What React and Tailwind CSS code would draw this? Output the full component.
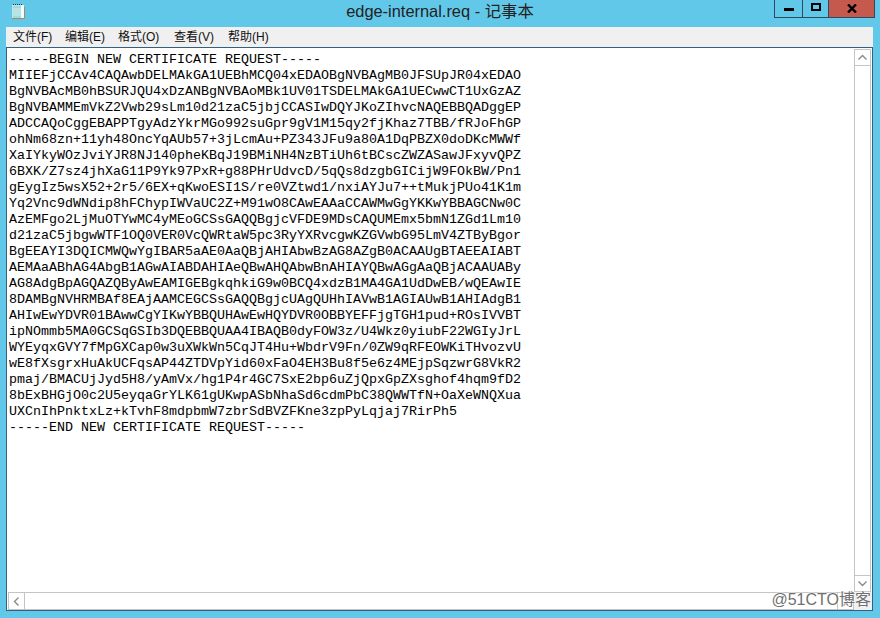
import React from "react";

const lines = [
  "-----BEGIN NEW CERTIFICATE REQUEST-----",
  "MIIEFjCCAv4CAQAwbDELMAkGA1UEBhMCQ04xEDAOBgNVBAgMB0JFSUpJR04xEDAO",
  "BgNVBAcMB0hBSURJQU4xDzANBgNVBAoMBk1UV01TSDELMAkGA1UECwwCT1UxGzAZ",
  "BgNVBAMMEmVkZ2Vwb29sLm10d21zaC5jbjCCASIwDQYJKoZIhvcNAQEBBQADggEP",
  "ADCCAQoCggEBAPPTgyAdzYkrMGo992suGpr9gV1M15qy2fjKhaz7TBB/fRJoFhGP",
  "ohNm68zn+11yh48OncYqAUb57+3jLcmAu+PZ343JFu9a80A1DqPBZX0doDKcMWWf",
  "XaIYkyWOzJviYJR8NJ140pheKBqJ19BMiNH4NzBTiUh6tBCscZWZASawJFxyvQPZ",
  "6BXK/Z7sz4jhXaG11P9Yk97PxR+g88PHrUdvcD/5qQs8dzgbGICijW9FOkBW/Pn1",
  "gEygIz5wsX52+2r5/6EX+qKwoESI1S/re0VZtwd1/nxiAYJu7++tMukjPUo41K1m",
  "Yq2Vnc9dWNdip8hFChypIWVaUC2Z+M91wO8CAwEAAaCCAWMwGgYKKwYBBAGCNw0C",
  "AzEMFgo2LjMuOTYwMC4yMEoGCSsGAQQBgjcVFDE9MDsCAQUMEmx5bmN1ZGd1Lm10",
  "d21zaC5jbgwWTF1OQ0VER0VcQWRtaW5pc3RyYXRvcgwKZGVwbG95LmV4ZTByBgor",
  "BgEEAYI3DQICMWQwYgIBAR5aAE0AaQBjAHIAbwBzAG8AZgB0ACAAUgBTAEEAIABT",
  "AEMAaABhAG4AbgB1AGwAIABDAHIAeQBwAHQAbwBnAHIAYQBwAGgAaQBjACAAUABy",
  "AG8AdgBpAGQAZQByAwEAMIGEBgkqhkiG9w0BCQ4xdzB1MA4GA1UdDwEB/wQEAwIE",
  "8DAMBgNVHRMBAf8EAjAAMCEGCSsGAQQBgjcUAgQUHhIAVwB1AGIAUwB1AHIAdgB1",
  "AHIwEwYDVR01BAwwCgYIKwYBBQUHAwEwHQYDVR0OBBYEFFjgTGH1pud+ROsIVVBT",
  "ipNOmmb5MA0GCSqGSIb3DQEBBQUAA4IBAQB0dyFOW3z/U4Wkz0yiubF22WGIyJrL",
  "WYEyqxGVY7fMpGXCap0w3uXWkWn5CqJT4Hu+WbdrV9Fn/0ZW9qRFEOWKiTHvozvU",
  "wE8fXsgrxHuAkUCFqsAP44ZTDVpYid60xFaO4EH3Bu8f5e6z4MEjpSqzwrG8VkR2",
  "pmaj/BMACUjJyd5H8/yAmVx/hg1P4r4GC7SxE2bp6uZjQpxGpZXsghof4hqm9fD2",
  "8bExBHGjO0c2U5eyqaGrYLK61gUKwpASbNhaSd6cdmPbC38QWWTfN+OaXeWNQXua",
  "UXCnIhPnktxLz+kTvhF8mdpbmW7zbrSdBVZFKne3zpPyLqjaj7RirPh5",
  "-----END NEW CERTIFICATE REQUEST-----",
];

const menus = [
  ["文件(F)", "w-[52px]"],
  ["编辑(E)", "w-[53px]"],
  ["格式(O)", "w-[56px]"],
  ["查看(V)", "w-[54px]"],
  ["帮助(H)", "w-[54px]"],
];

const NotepadIcon = () => (
  <svg width="13" height="16" viewBox="0 0 13 16">
    <rect x="0" y="1" width="11" height="13" fill="#bfe6e8" />
    <rect x="1" y="2" width="8" height="12" fill="#a5dadd" />
    <path d="M1 5h8M1 7h8M1 9h8M1 11h8" stroke="#c9eef0" />
    <rect x="9" y="1" width="3" height="13" fill="#f4fbfb" />
    <path d="M0 14.5h12.5V3" fill="none" stroke="#a98a5e" />
    <path d="M1 .5h1M3 .5h1M5 .5h1M7 .5h1M9 .5h1" stroke="#333" />
  </svg>
);

const Arrow = ({ d }) => (
  <svg width="9" height="7" viewBox="0 0 9 7">
    <path d={d} fill="none" stroke="#8a8a8a" strokeWidth="1.4" />
  </svg>
);

const App = () => {
  return (
    <div className="w-[880px] h-[618px] bg-[#62c8ea] flex flex-col overflow-hidden relative font-['Liberation_Sans','Noto_Sans_CJK_SC',sans-serif]">
      <div className="h-[27px] flex shrink-0">
        <div className="w-[12px]" />
        <div className="pt-[4px] w-[13px]">
          <NotepadIcon />
        </div>
        <div className="flex-1 flex justify-center pt-[2px] pl-[81px] text-[16.4px] leading-[18px] text-[#222] whitespace-nowrap">
          edge-internal.req - 记事本
        </div>
        <div className="flex h-[18px] mr-[5px] border-x border-b border-[#2f4a5a]">
          <div className="w-[28px] flex items-center justify-center border-r border-[#2f4a5a]">
            <div className="w-[10px] h-[3px] bg-black mt-[1px]" />
          </div>
          <div className="w-[25px] flex items-start justify-center pt-[3px]">
            <div className="w-[10px] h-[8px] border-2 border-black" />
          </div>
          <div className="w-[46px] bg-[#c6594e] border-l border-[#2f4a5a] flex items-center justify-center">
            <svg width="10" height="9" viewBox="0 0 10 9">
              <path d="M1 0.5 9 8.5M9 0.5 1 8.5" stroke="#000" strokeWidth="2.4" fill="none" />
            </svg>
          </div>
        </div>
      </div>

      <div className="ml-[6px] w-[867px] h-[584px] flex flex-col bg-white">
        <div className="h-[20px] bg-[#f0f0f0] flex items-center pl-[7px] text-[12px] text-[#111] shrink-0">
          {menus.map(([label, width]) => (
            <div key={label} className={width + " whitespace-nowrap"}>
              {label}
            </div>
          ))}
        </div>
        <div className="flex-1 min-h-0 border border-[#34607e] flex flex-col relative">
          <div className="flex-1 min-h-0 flex">
            <div className="flex-1 pl-[2px] pt-[4px] font-['Liberation_Mono',monospace] text-[13.33px] leading-[16px] text-black whitespace-pre">
              {lines.map((line, i) => (
                <div key={i}>{line}</div>
              ))}
            </div>
            <div className="w-[17px] mt-[1px] mr-[1px] border border-[#c4c4c4] flex flex-col justify-between">
              <div className="h-[16px] flex items-center justify-center border-b border-[#c4c4c4]">
                <Arrow d="M.5 5.5 4.5 1.5 8.5 5.5" />
              </div>
              <div className="h-[16px] flex items-center justify-center border-t border-[#c4c4c4]">
                <Arrow d="M.5 1.5 4.5 5.5 8.5 1.5" />
              </div>
            </div>
          </div>
          <div className="h-[18px] flex shrink-0">
            <div className="flex-1 ml-[1px] border border-[#c4c4c4] flex justify-between">
              <div className="w-[16px] flex items-center justify-center border-r border-[#c4c4c4]">
                <svg width="7" height="9" viewBox="0 0 7 9">
                  <path d="M5.5.5 1.5 4.5 5.5 8.5" fill="none" stroke="#8a8a8a" strokeWidth="1.4" />
                </svg>
              </div>
              <div className="w-[16px] flex items-center justify-center border-l border-[#c4c4c4]">
                <svg width="7" height="9" viewBox="0 0 7 9">
                  <path d="M1.5.5 5.5 4.5 1.5 8.5" fill="none" stroke="#8a8a8a" strokeWidth="1.4" />
                </svg>
              </div>
            </div>
            <div className="w-[18px] bg-[#f0f0f0]" />
          </div>
        </div>
      </div>

      <div className="absolute right-[9px] bottom-[8px] text-[16px] leading-[20px] text-[#707070] [text-shadow:0_0_2px_#fff,0_0_2px_#fff] whitespace-nowrap">
        @51CTO博客
      </div>
    </div>
  );
};

export default App;
